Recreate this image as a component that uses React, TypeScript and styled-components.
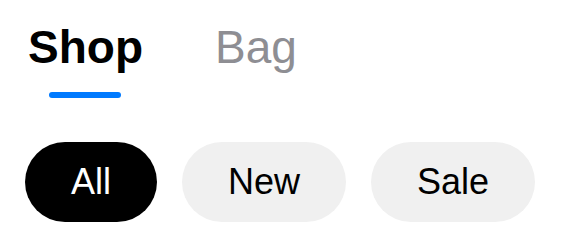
import React, { useState } from "react";
import styled, { createGlobalStyle } from "styled-components";

const GlobalStyle = createGlobalStyle`
  html, body {
    margin: 0;
    padding: 0;
    background: #ffffff;
  }
  body {
    font-family: "Liberation Sans", Arial, Helvetica, sans-serif;
    -webkit-font-smoothing: antialiased;
  }
`;

const Page = styled.div`
  width: 563px;
  height: 250px;
  box-sizing: border-box;
  padding: 24px 0 0 25px;
  display: flex;
  flex-direction: column;
  background: #ffffff;
`;

const TabBar = styled.div`
  display: flex;
  align-items: flex-start;
  gap: 72px;
  padding-left: 3px;
`;

const Tab = styled.div`
  display: flex;
  flex-direction: column;
  align-items: center;
  cursor: pointer;
`;

const TabLabel = styled.span<{ $active: boolean }>`
  font-size: 46px;
  line-height: 46px;
  font-weight: ${(p) => (p.$active ? 700 : 400)};
  color: ${(p) => (p.$active ? "#000000" : "#8e8e93")};
  white-space: nowrap;
`;

const Indicator = styled.div<{ $active: boolean }>`
  margin-top: 22px;
  width: 72px;
  height: 6px;
  border-radius: 3px;
  background: ${(p) => (p.$active ? "#007aff" : "transparent")};
`;

const Chips = styled.div`
  display: flex;
  gap: 25px;
  margin-top: 44px;
`;

const Chip = styled.button<{ $selected: boolean }>`
  height: 80px;
  padding: 0 46px;
  min-width: 132px;
  border: none;
  border-radius: 40px;
  display: flex;
  align-items: center;
  justify-content: center;
  font-family: "Liberation Sans", Arial, Helvetica, sans-serif;
  font-size: 36px;
  line-height: 36px;
  font-weight: 400;
  background: ${(p) => (p.$selected ? "#000000" : "#f0f0f0")};
  color: ${(p) => (p.$selected ? "#ffffff" : "#000000")};
  cursor: pointer;
`;

const tabs = ["Shop", "Bag"];
const filters = ["All", "New", "Sale"];

export default function App() {
  const [tab, setTab] = useState("Shop");
  const [filter, setFilter] = useState("All");
  return (
    <>
      <GlobalStyle />
      <Page>
        <TabBar>
          {tabs.map((t) => (
            <Tab key={t} onClick={() => setTab(t)}>
              <TabLabel $active={t === tab}>{t}</TabLabel>
              <Indicator $active={t === tab} />
            </Tab>
          ))}
        </TabBar>
        <Chips>
          {filters.map((f) => (
            <Chip key={f} $selected={f === filter} onClick={() => setFilter(f)}>
              {f}
            </Chip>
          ))}
        </Chips>
      </Page>
    </>
  );
}
